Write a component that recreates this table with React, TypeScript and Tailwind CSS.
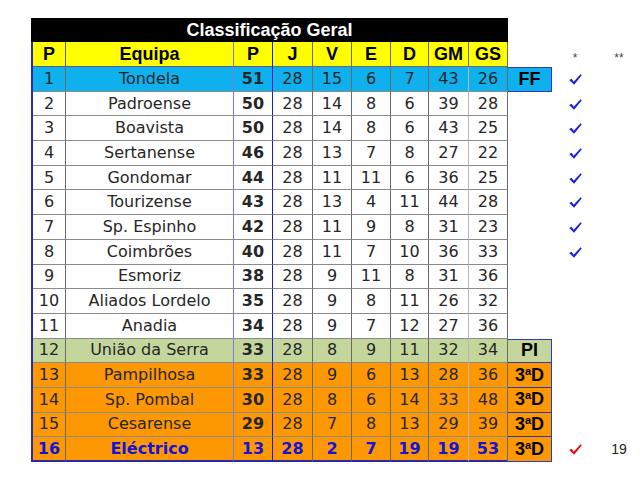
type Team = [number, string, number, number, number, number, number, number, number];

const teams: Team[] = [
  [1, "Tondela", 51, 28, 15, 6, 7, 43, 26],
  [2, "Padroense", 50, 28, 14, 8, 6, 39, 28],
  [3, "Boavista", 50, 28, 14, 8, 6, 43, 25],
  [4, "Sertanense", 46, 28, 13, 7, 8, 27, 22],
  [5, "Gondomar", 44, 28, 11, 11, 6, 36, 25],
  [6, "Tourizense", 43, 28, 13, 4, 11, 44, 28],
  [7, "Sp. Espinho", 42, 28, 11, 9, 8, 31, 23],
  [8, "Coimbrões", 40, 28, 11, 7, 10, 36, 33],
  [9, "Esmoriz", 38, 28, 9, 11, 8, 31, 36],
  [10, "Aliados Lordelo", 35, 28, 9, 8, 11, 26, 32],
  [11, "Anadia", 34, 28, 9, 7, 12, 27, 36],
  [12, "União da Serra", 33, 28, 8, 9, 11, 32, 34],
  [13, "Pampilhosa", 33, 28, 9, 6, 13, 28, 36],
  [14, "Sp. Pombal", 30, 28, 8, 6, 14, 33, 48],
  [15, "Cesarense", 29, 28, 7, 8, 13, 29, 39],
  [16, "Eléctrico", 13, 28, 2, 7, 19, 19, 53],
];

const widths = ["w-[39px]", "w-[40px]", "w-[39px]", "w-[39px]", "w-[38px]", "w-[40px]", "w-[39px]"];

function Check({ color }: { color: string }) {
  return (
    <svg width="13" height="11" viewBox="0 0 12 10">
      <path d="M0.2 5.5 L2.4 4.4 L4.3 7 L10.7 0.2 L11.8 1.1 L4.7 9.8 Z" fill={color} />
    </svg>
  );
}

function rowBg(pos: number) {
  if (pos === 1) return "bg-[#0eb0ee]";
  if (pos === 12) return "bg-[#c4d69c]";
  if (pos >= 13) return "bg-[#fd9802]";
  return "bg-white";
}

function sideLabel(pos: number) {
  if (pos === 1) return "FF";
  if (pos === 12) return "PI";
  if (pos >= 13) return "3aD";
  return "";
}

export default function App() {
  return (
    <div className="w-[640px] h-[480px] bg-white pl-[31px] pt-[18px] font-['DejaVu_Sans',sans-serif] text-[16px] text-[#262626]">
      <div className="w-[477px] h-[24px] bg-black flex items-center justify-center font-['Liberation_Sans',Arial,sans-serif] font-bold text-[18px] text-white">
        Classificação Geral
      </div>

      <div className="flex h-[25px]">
        <div className="flex bg-[#ffff00] border-l-2 border-l-[#2a2aa8] font-['Liberation_Sans',Arial,sans-serif] font-bold text-[18px] text-black">
          <div className="w-[33px] flex items-center justify-center border-r border-b border-[#5a5a8a]">P</div>
          <div className="w-[168px] flex items-center justify-center border-r border-b border-b-[#5a5a8a] border-r-[#7b7be0]">Equipa</div>
          <div className="w-[39px] flex items-center justify-center border-r border-b border-b-[#5a5a8a] border-r-[#1a1ad0]">P</div>
          {["J", "V", "E", "D", "GM", "GS"].map((h, i) => (
            <div key={h} className={`${widths[i + 1]} flex items-center justify-center border-r border-b border-[#6a6a6a]`}>
              {h}
            </div>
          ))}
        </div>
        <div className="w-[44px]" />
        <div className="w-[46px] flex items-center justify-center text-[12px] text-[#444] font-['Liberation_Sans',Arial,sans-serif] pt-[6px]">*</div>
        <div className="w-[42px] flex items-center justify-center text-[12px] text-[#444] font-['Liberation_Sans',Arial,sans-serif] pt-[6px]">**</div>
      </div>

      {teams.map((t) => {
        const pos = t[0];
        const last = pos === 16;
        const label = sideLabel(pos);
        const bottom = last ? "border-b-2 border-b-[#2a2aa8]" : "border-b border-b-[#8a8a8a]";
        return (
          <div key={pos} className="flex h-[24.7px]">
            <div className={`flex ${rowBg(pos)} border-l-2 border-l-[#2a2aa8] ${last ? "text-[#1414d8] font-bold" : ""}`}>
              <div className={`w-[33px] flex items-center justify-center border-r border-r-[#6a6a6a] ${bottom}`}>{pos}</div>
              <div className={`w-[168px] flex items-center justify-center border-r border-r-[#7b7be0] ${bottom}`}>{t[1]}</div>
              <div className={`w-[39px] flex items-center justify-center font-bold border-r border-r-[#1a1ad0] ${bottom}`}>{t[2]}</div>
              {t.slice(3).map((v, i) => (
                <div
                  key={i}
                  className={`${widths[i + 1]} flex items-center justify-center border-r ${i === 4 ? "border-r-[#b8b8b8]" : "border-r-[#6a6a6a]"} ${bottom}`}
                >
                  {v}
                </div>
              ))}
            </div>
            {label ? (
              <div
                className={`w-[44px] flex items-center justify-center border-r border-b border-[#2e3ab8] ${pos === 1 || pos === 12 ? "border-t" : ""} ${rowBg(pos)} font-['Liberation_Sans',Arial,sans-serif] font-bold text-[18px] text-black`}
              >
                {label === "3aD" ? (
                  <span>
                    3<span className="text-[11px] align-[6px]">a</span>D
                  </span>
                ) : (
                  label
                )}
              </div>
            ) : (
              <div className="w-[44px]" />
            )}
            <div className="w-[46px] flex items-center justify-center">
              {pos <= 8 && <Check color="#1c1ce0" />}
              {last && <Check color="#e00a0a" />}
            </div>
            <div className="w-[42px] flex items-center justify-center font-['Liberation_Sans',Arial,sans-serif] text-[14px] text-[#222]">
              {last ? "19" : ""}
            </div>
          </div>
        );
      })}
    </div>
  );
}
